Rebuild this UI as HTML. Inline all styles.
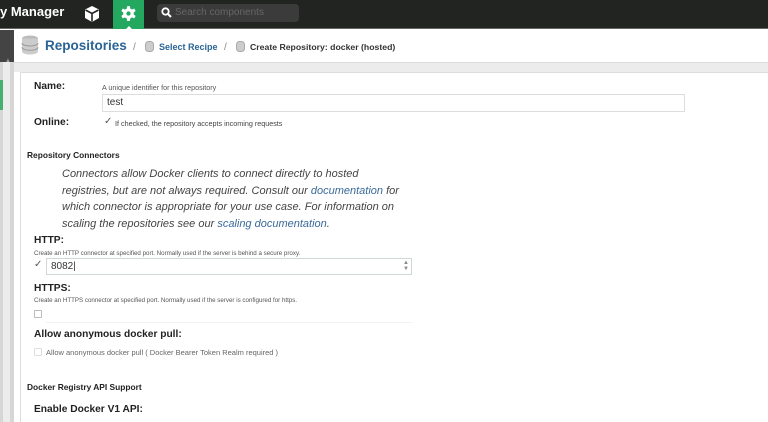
<!DOCTYPE html>
<html><head><style>
*{margin:0;padding:0;box-sizing:border-box}
body{width:768px;height:422px;overflow:hidden;background:#fff;font-family:"Liberation Sans",sans-serif;color:#222;position:relative}
.a{position:absolute}
.top{left:0;top:0;width:768px;height:29px;background:#222422;border-bottom:1px solid #666}
.lbl{font-weight:bold;font-size:10.2px;color:#222}
.hint{font-size:6px;color:#555;white-space:nowrap}
.inp{border:1px solid #ddd;background:#fff}
.cb{width:8px;height:8px;border:1px solid #bbb;border-radius:1px;background:#fff}
.it{font-style:italic;font-size:11px;color:#444;line-height:16.7px}
.lk{color:#3a6a99}
</style></head><body>
<div class="a top"></div>
<div class="a" style="left:0;top:4px;color:#fff;font-weight:bold;font-size:13px">y Manager</div>
<svg class="a" style="left:83px;top:5px" width="18" height="18" viewBox="0 0 18 18"><path d="M9 1 L16 4.5 V13 L9 17 L2 13 V4.5Z" fill="#fff"/><path d="M2.5 5 L9 8.5 L15.5 5 M9 8.5 V16.5" stroke="#222" stroke-width="1.6" fill="none"/></svg>
<div class="a" style="left:113px;top:0;width:31px;height:29px;background:#24a860"></div>
<svg class="a" style="left:120px;top:5px" width="17" height="17" viewBox="0 0 16 16"><g fill="#fff"><rect x="6.5" y="1" width="3" height="14" rx="0.8"/><rect x="6.5" y="1" width="3" height="14" rx="0.8" transform="rotate(60 8 8)"/><rect x="6.5" y="1" width="3" height="14" rx="0.8" transform="rotate(120 8 8)"/><circle cx="8" cy="8" r="5"/></g><circle cx="8" cy="8" r="2" fill="#24a860"/></svg>
<div class="a" style="left:125px;top:26px;width:0;height:0;border-left:4px solid transparent;border-right:4px solid transparent;border-bottom:4px solid #fff"></div>
<div class="a" style="left:157px;top:4px;width:142px;height:18px;background:#3a3b3a;border-radius:4px"></div>
<svg class="a" style="left:161px;top:7px" width="11" height="11" viewBox="0 0 11 11"><circle cx="4.5" cy="4.5" r="3.2" stroke="#fff" stroke-width="1.8" fill="none"/><path d="M7 7 L10 10" stroke="#fff" stroke-width="2"/></svg>
<div class="a" style="left:175px;top:7px;font-size:10px;color:#666">Search components</div>
<div class="a" style="left:0;top:30px;width:14px;height:32px;background:#444"></div>
<div class="a" style="left:0;top:62px;width:14px;height:360px;background:#d6d6d6"></div>
<div class="a" style="left:0;top:80px;width:3px;height:30px;background:#45b070"></div>
<div class="a" style="left:3px;top:62px;width:7px;height:360px;background:#ececec"></div>
<div class="a" style="left:5px;top:58px;font-size:6px;color:#999">▲</div>
<div class="a" style="left:14px;top:62px;width:754px;height:10px;background:#ececec;border-top:1px solid #ddd"></div>
<svg class="a" style="left:21px;top:35px" width="18" height="20" viewBox="0 0 18 20"><ellipse cx="9" cy="3.5" rx="8" ry="3" fill="#bbb"/><path d="M1 3.5V16.5c0 1.7 3.6 3 8 3s8-1.3 8-3V3.5" fill="#ccc"/><path d="M1 8c0 1.7 3.6 3 8 3s8-1.3 8-3M1 12.3c0 1.7 3.6 3 8 3s8-1.3 8-3" stroke="#999" fill="none"/></svg>
<div class="a" style="left:45px;top:38px;font-size:13.5px;font-weight:bold;color:#2a6496">Repositories</div>
<div class="a" style="left:133px;top:42px;font-size:10px;color:#888">/</div>
<svg class="a" style="left:145px;top:41px" width="9" height="11" viewBox="0 0 9 11"><rect x="0.5" y="0.5" width="8" height="10" rx="3" fill="#ccc" stroke="#aaa"/></svg>
<div class="a" style="left:159px;top:42px;font-size:9px;font-weight:bold;color:#2a6496">Select Recipe</div>
<div class="a" style="left:224px;top:42px;font-size:10px;color:#888">/</div>
<svg class="a" style="left:236px;top:41px" width="9" height="11" viewBox="0 0 9 11"><rect x="0.5" y="0.5" width="8" height="10" rx="3" fill="#ccc" stroke="#aaa"/></svg>
<div class="a" style="left:250px;top:42px;font-size:8.7px;font-weight:bold;color:#333">Create Repository: docker (hosted)</div>
<div class="a" style="left:20px;top:72px;width:760px;height:350px;background:#fff;border-left:1px solid #ddd;border-top:1px solid #ddd"></div>
<div class="a lbl" style="left:34px;top:81px">Name:</div>
<div class="a hint" style="left:102px;top:83px;font-size:7.2px">A unique identifier for this repository</div>
<div class="a inp" style="left:102px;top:94px;width:583px;height:18px"></div>
<div class="a" style="left:107px;top:97px;font-size:10px;color:#333">test</div>
<div class="a lbl" style="left:34px;top:117px">Online:</div>
<div class="a" style="left:104px;top:116px;font-size:10px;color:#555">✓</div>
<div class="a hint" style="left:115px;top:119px;font-size:7.2px;color:#444">If checked, the repository accepts incoming requests</div>
<div class="a" style="left:27px;top:150px;font-size:8.4px;font-weight:bold">Repository Connectors</div>
<div class="a it" style="left:62px;top:166px;width:345px">Connectors allow Docker clients to connect directly to hosted registries, but are not always required. Consult our <span class="lk">documentation</span> for which connector is appropriate for your use case. For information on scaling the repositories see our <span class="lk">scaling documentation</span>.</div>
<div class="a lbl" style="left:34px;top:235px">HTTP:</div>
<div class="a hint" style="left:34px;top:250px;font-size:6.2px">Create an HTTP connector at specified port. Normally used if the server is behind a secure proxy.</div>
<div class="a" style="left:34px;top:259px;font-size:10px;color:#555">✓</div>
<div class="a inp" style="left:46px;top:258px;width:366px;height:17px;border-color:#cfd8d8"></div>
<div class="a" style="left:51px;top:261px;font-size:10px;color:#333">8082|</div>
<div class="a" style="left:403px;top:260px;font-size:6px;color:#888;line-height:6px">▲<br>▼</div>
<div class="a lbl" style="left:34px;top:283px">HTTPS:</div>
<div class="a hint" style="left:34px;top:297px;font-size:6.2px">Create an HTTPS connector at specified port. Normally used if the server is configured for https.</div>
<div class="a cb" style="left:34px;top:310px"></div>
<div class="a" style="left:46px;top:306px;width:366px;height:17px;border-bottom:1px solid #f2f2f2"></div>
<div class="a lbl" style="left:34px;top:329px">Allow anonymous docker pull:</div>
<div class="a cb" style="left:34px;top:348px;border-color:#ddd"></div>
<div class="a" style="left:46px;top:348px;font-size:7.5px;color:#666;white-space:nowrap">Allow anonymous docker pull ( Docker Bearer Token Realm required )</div>
<div class="a" style="left:27px;top:382px;font-size:8.4px;font-weight:bold">Docker Registry API Support</div>
<div class="a lbl" style="left:34px;top:404px">Enable Docker V1 API:</div>
</body></html>
